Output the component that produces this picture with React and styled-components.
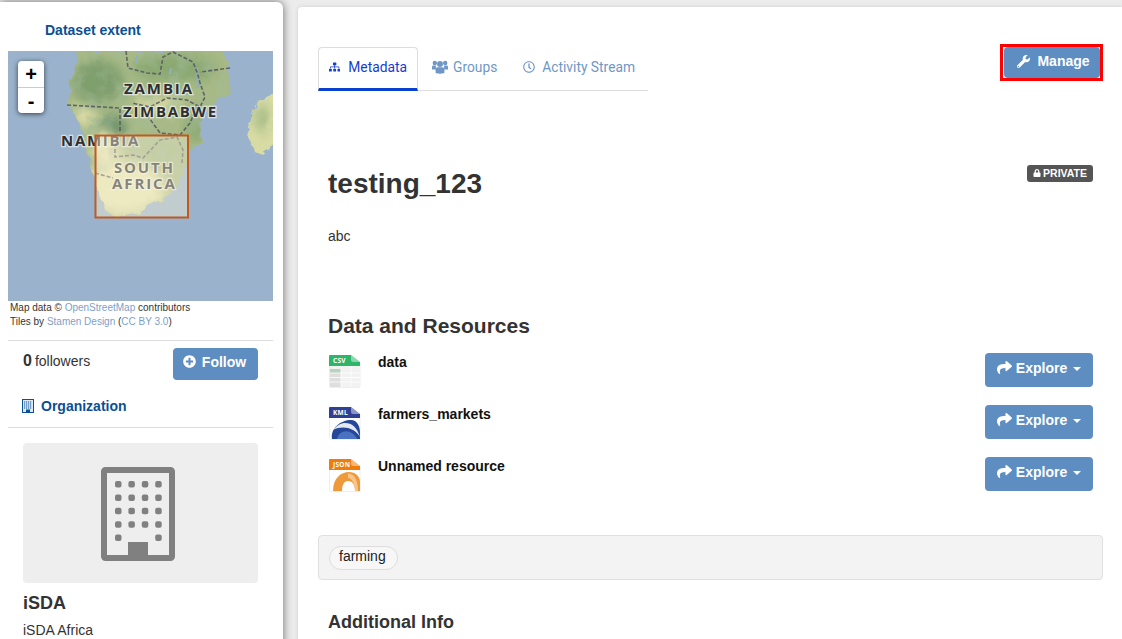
import React from 'react'
import styled, { createGlobalStyle } from 'styled-components'
import {
  FaSitemap,
  FaRegClock,
  FaWrench,
  FaLock,
  FaPlusCircle,
  FaShare,
} from 'react-icons/fa'

const GlobalStyle = createGlobalStyle`
  html, body {
    margin: 0;
    height: 639px;
    overflow: hidden;
    background: #ececec;
    font-family: "Liberation Sans", Arial, sans-serif;
    font-size: 14px;
    color: #333;
  }
`

const Page = styled.div`
  display: flex;
  gap: 15px;
  height: 639px;
  overflow: hidden;
  align-items: flex-start;
`

const Sidebar = styled.aside`
  width: 283px;
  height: 700px;
  flex: none;
  margin-top: 2px;
  padding: 0 10px 0 8px;
  box-sizing: border-box;
  background: #fff;
  border-radius: 0 6px 0 0;
  box-shadow: 0 0 10px rgba(0, 0, 0, 0.55);
`

const ExtentTitle = styled.h2`
  margin: 0;
  padding: 20px 0 0 37px;
  height: 49px;
  box-sizing: border-box;
  font-size: 14px;
  line-height: 16px;
  color: #0b4f94;
`

const MapBox = styled.div`
  position: relative;
  height: 250px;
  svg {
    display: block;
  }
`

const ZoomControl = styled.div`
  position: absolute;
  left: 10px;
  top: 10px;
  width: 26px;
  height: 52px;
  background: #fff;
  border-radius: 4px;
  box-shadow: 0 1px 5px rgba(0, 0, 0, 0.65);
  display: flex;
  flex-direction: column;
`

const ZoomButton = styled.span`
  height: 26px;
  line-height: 26px;
  text-align: center;
  font-size: 20px;
  font-weight: bold;
  color: #000;
  & + & {
    border-top: 1px solid #ccc;
  }
`

const Attribution = styled.p`
  margin: 0;
  padding: 0 0 11px 2px;
  font-size: 10px;
  line-height: 14px;
  border-bottom: 1px solid #ddd;
  a {
    color: #7d9fcb;
    text-decoration: none;
  }
`

const FollowRow = styled.div`
  display: flex;
  justify-content: space-between;
  align-items: flex-start;
  padding: 7px 15px 0;
  height: 49px;
`

const Followers = styled.span`
  line-height: 12px;
  height: 26px;
  display: flex;
  align-items: center;
  gap: 3px;
  b {
    font-size: 16px;
  }
`

const Button = styled.a`
  display: inline-flex;
  align-items: center;
  justify-content: center;
  box-sizing: border-box;
  padding-bottom: 3px;
  gap: 6px;
  background: #5e8dc1;
  color: #fff;
  font-weight: bold;
  font-size: 14px;
  border-radius: 4px;
`

const FollowButton = styled(Button)`
  width: 85px;
  height: 32px;
  padding: 0 2px 5px 0;
`

const OrgHeading = styled.h2`
  margin: 0;
  padding: 0 15px 12px 14px;
  font-size: 14px;
  line-height: 18px;
  color: #0b4f94;
  border-bottom: 1px solid #ddd;
  display: flex;
  align-items: center;
  gap: 7px;
`

const OrgCard = styled.div`
  padding: 15px 15px 0;
`

const OrgImage = styled.div`
  height: 140px;
  background: #eee;
  border-radius: 4px;
  display: flex;
  align-items: center;
  justify-content: center;
  padding: 2px 6px 0 0;
  box-sizing: border-box;
`

const OrgName = styled.h3`
  margin: 10px 0 0;
  font-size: 18px;
  line-height: 20px;
  color: #333;
`

const OrgDescription = styled.p`
  margin: 8px 0 0;
  line-height: 18px;
`

const Main = styled.main`
  flex: 1;
  height: 700px;
  margin-top: 7px;
  padding: 40px 19px 0 20px;
  background: #fff;
  border-radius: 4px 0 0 0;
  box-shadow: 0 0 4px rgba(0, 0, 0, 0.12);
`

const Header = styled.div`
  display: flex;
  justify-content: space-between;
  align-items: flex-start;
`

const Tabs = styled.nav`
  width: 330px;
  height: 44px;
  display: flex;
  border-bottom: 1px solid #ddd;
  box-sizing: border-box;
  font-family: Roboto, "Liberation Sans", sans-serif;
  font-size: 13.8px;
  white-space: nowrap;
`

const Tab = styled.a`
  display: flex;
  align-items: center;
  gap: ${p => p.$gap}px;
  height: 44px;
  box-sizing: border-box;
  padding: 0 12px 4px;
  color: #6f97c6;
  ${p =>
    p.$active &&
    `
    width: 100px;
    margin-right: 2px;
    padding: 0 10px 2px;
    color: #1440d0;
    border: 1px solid #ddd;
    border-bottom: 3px solid #0b3fd0;
    border-radius: 4px 4px 0 0;
  `}
  & + & + & {
    margin-left: 2px;
  }
`

const ManageFrame = styled.div`
  margin: -3px 0 0;
  border: 3px solid #f00;
  padding-left: 1px;
  display: flex;
`

const ManageButton = styled(Button)`
  width: 96px;
  height: 31px;
  padding-left: 3px;
  gap: 7px;
`

const TitleRow = styled.div`
  display: flex;
  justify-content: space-between;
  align-items: flex-start;
  padding: 75px 10px 0;
`

const Title = styled.h1`
  margin: 0;
  font-size: 28px;
  line-height: 36px;
  color: #333;
`

const PrivateBadge = styled.span`
  display: inline-flex;
  align-items: center;
  gap: 2px;
  height: 17px;
  margin-top: -1px;
  padding: 0 6px 2px;
  box-sizing: border-box;
  background: #555;
  color: #fff;
  border-radius: 3px;
  font-size: 10.5px;
  font-weight: bold;
`

const Notes = styled.p`
  margin: 0;
  padding: 25px 10px 0;
  line-height: 18px;
`

const SectionTitle = styled.h2`
  margin: 0;
  padding: ${p => p.$pad};
  font-size: ${p => p.$size}px;
  line-height: 24px;
  color: #333;
`

const ResourceList = styled.ul`
  list-style: none;
  margin: 0;
  padding: 15px 10px 0;
`

const ResourceRow = styled.li`
  display: flex;
  align-items: flex-start;
  height: 52px;
`

const ResourceIcon = styled.svg`
  width: 33px;
  height: 34px;
  flex: none;
  margin-top: 1px;
`

const ResourceName = styled.span`
  flex: 1;
  margin-left: 17px;
  line-height: 18px;
  font-weight: bold;
  color: #111;
`

const ExploreButton = styled(Button)`
  width: 108px;
  height: 34px;
  padding-bottom: 5px;
  gap: 4px;
  margin-left: auto;
`

const Caret = styled.span`
  width: 0;
  height: 0;
  margin: 2px 0 0 2px;
  border-left: 4px solid transparent;
  border-right: 4px solid transparent;
  border-top: 4px solid #fff;
`

const TagBox = styled.div`
  margin-top: 26px;
  height: 45px;
  box-sizing: border-box;
  padding: 10px;
  background: #f3f3f3;
  border: 1px solid #e0e0e0;
  border-radius: 4px;
`

const Tag = styled.span`
  display: inline-block;
  height: 24px;
  line-height: 19px;
  box-sizing: border-box;
  padding: 0 11px 0 9px;
  background: #f7f7f7;
  border: 1px solid #ddd;
  border-radius: 12px;
  color: #222;
`

// page coordinates, the map viewBox starts at 8,51
const MapDrawing = () => (
  <svg width="265" height="250" viewBox="8 51 265 250">
    <defs>
      <filter id="soft" x="-40%" y="-40%" width="180%" height="180%">
        <feGaussianBlur stdDeviation="6" />
      </filter>
      <filter id="rough" x="0" y="0" width="100%" height="100%">
        <feTurbulence type="fractalNoise" baseFrequency="0.09" numOctaves="3" seed="4" />
        <feDisplacementMap in="SourceGraphic" scale="9" />
      </filter>
      <filter id="mottle" x="0" y="0" width="100%" height="100%">
        <feTurbulence type="fractalNoise" baseFrequency="0.07" numOctaves="4" seed="9" />
        <feColorMatrix values="0 0 0 0 0.36  0 0 0 0 0.50  0 0 0 0 0.34  0 0 0 2.4 -1.0" />
      </filter>
      <clipPath id="land">
        <path d="M78 51 L72 72 L70 85 L68 105 L80 124 L88 157 L97 187 L105 210 L115 217 L140 212 L163 200 L180 180 L188 160 L190 150 L202 143 L200 123 L213 103 L232 87 L227 63 L223 51 Z" />
      </clipPath>
      <clipPath id="madagascar">
        <path d="M276 91 L257 100 L252 115 L248 133 L253 150 L263 155 L276 146 Z" />
      </clipPath>
    </defs>
    <rect x="8" y="51" width="265" height="250" fill="#9ab2cc" />
    <g filter="url(#rough)">
      <g clipPath="url(#land)">
        <rect x="60" y="51" width="180" height="170" fill="#a8ba86" />
        <ellipse cx="98" cy="82" rx="26" ry="22" fill="#7f9f6d" filter="url(#soft)" />
        <ellipse cx="112" cy="128" rx="13" ry="13" fill="#6a8f68" filter="url(#soft)" />
        <ellipse cx="175" cy="68" rx="42" ry="14" fill="#8aa871" filter="url(#soft)" />
        <ellipse cx="84" cy="116" rx="12" ry="9" fill="#e0dfa8" filter="url(#soft)" />
        <ellipse cx="160" cy="104" rx="24" ry="9" fill="#d5d8a2" filter="url(#soft)" />
        <ellipse cx="125" cy="188" rx="40" ry="28" fill="#ece7b2" filter="url(#soft)" />
        <ellipse cx="105" cy="152" rx="13" ry="22" fill="#ece7b2" filter="url(#soft)" />
        <ellipse cx="165" cy="152" rx="22" ry="14" fill="#a0b67f" filter="url(#soft)" />
        <ellipse cx="195" cy="125" rx="9" ry="18" fill="#8ca86f" filter="url(#soft)" />
        <rect x="60" y="51" width="180" height="120" filter="url(#mottle)" opacity="0.5" />
      </g>
      <g clipPath="url(#madagascar)">
        <rect x="245" y="90" width="32" height="70" fill="#d8dba4" />
        <ellipse cx="262" cy="118" rx="7" ry="14" fill="#a3b985" filter="url(#soft)" />
      </g>
    </g>
    <g fill="none" stroke="#8fb0c0" strokeWidth="2">
      <path d="M137 55 L136 64" />
      <path d="M171 68 L170 74" />
      <path d="M197 68 L198 88" />
    </g>
    <g fill="none" stroke="#55555f" strokeWidth="1.6" strokeDasharray="4 2" opacity="0.85">
      <path d="M67 105 L120 108 L120 133" />
      <path d="M126 51 L128 68 L147 73 L160 74 L163 57 L173 52 L193 62 L197 72 L200 83 L205 97 L200 107 L187 100 L167 98 L150 107 L132 103" />
      <path d="M230 68 L200 72" />
      <path d="M147 115 L160 133 L180 135 L190 123 L197 107" />
      <path d="M115 137 L115 157 L133 155 L143 158 L160 140 L177 137 L183 150 L182 163" />
      <path d="M95 173 L113 178" />
    </g>
    <g
      fontFamily="'Open Sans', Lato, sans-serif"
      fontWeight="700"
      fontSize="15"
      fill="#2f2f33"
      stroke="#fff"
      strokeOpacity="0.6"
      strokeWidth="2.5"
      paintOrder="stroke"
    >
      <text x="124" y="93.5" letterSpacing="1.9">ZAMBIA</text>
      <text x="123" y="117" letterSpacing="1.7">ZIMBABWE</text>
      <text x="61" y="146" letterSpacing="1.7">NAMIBIA</text>
      <text x="114" y="173" letterSpacing="1.8">SOUTH</text>
      <text x="112" y="189" letterSpacing="1.9">AFRICA</text>
    </g>
    <rect x="95.5" y="135.5" width="92.5" height="82" fill="#f0ebd0" fillOpacity="0.45" stroke="#bf5a20" strokeWidth="2" />
  </svg>
)

const BuildingDrawing = () => {
  const dots = []
  for (let row = 0; row < 5; row++) {
    for (let col = 0; col < 4; col++) {
      if (row === 4 && (col === 1 || col === 2)) continue
      dots.push(<rect key={`${row}-${col}`} x={14 + col * 13.4} y={14 + row * 13.4} width="6.5" height="6.5" rx="2" />)
    }
  }
  return (
    <svg width="74" height="94" viewBox="0 0 74 94">
      <rect x="3" y="3" width="68" height="88" rx="1.5" fill="none" stroke="#808080" strokeWidth="6" />
      <g fill="#808080">
        {dots}
        <rect x="27" y="75" width="20" height="17" />
      </g>
    </svg>
  )
}

// small building next to the Organization heading
const OrgIcon = () => (
  <svg width="12" height="14" viewBox="0 0 12 14">
    <rect x="0.5" y="0.5" width="11" height="13" fill="#dfe9f2" stroke="#0b4f94" />
    <path d="M2 3 H10 M2 5 H10 M2 7 H10 M2 9 H10" stroke="#0b4f94" strokeDasharray="1.2 0.8" />
    <rect x="4" y="10.5" width="4" height="3" fill="#0b4f94" />
  </svg>
)

const GroupsIcon = () => (
  <svg width="16" height="14" viewBox="0 0 16 14" fill="#6f97c6">
    <circle cx="2.8" cy="3" r="2.2" />
    <circle cx="13.2" cy="3" r="2.2" />
    <circle cx="8" cy="4" r="3" />
    <path d="M0 9.5 V7 Q0 5.6 1.5 5.6 H4 Q3.6 7.5 4 9.5 Z" />
    <path d="M16 9.5 V7 Q16 5.6 14.5 5.6 H12 Q12.4 7.5 12 9.5 Z" />
    <path d="M3.6 13 V9.5 Q3.6 7.2 5.6 7.2 H10.4 Q12.4 7.2 12.4 9.5 V13 Q8 14.6 3.6 13 Z" />
  </svg>
)

const FileIcon = ({ color, label, children }) => (
  <ResourceIcon viewBox="0 0 33 34">
    <rect x="1.5" y="8" width="30.5" height="25.5" rx="1" fill="#fff" stroke="#eee" />
    {children}
    <path d="M1 2 a1 1 0 0 1 1 -1 H23 L32 8 V12 H1 Z" fill={color} />
    <path d="M23 1 L32 8 H25 Q23 8 23 6 Z" fill="#fff" fillOpacity="0.45" />
    <text x="5" y="9" fontFamily="'Open Sans', sans-serif" fontWeight="700" fontSize="6.5" letterSpacing="0.3" fill="#fff">
      {label}
    </text>
  </ResourceIcon>
)

const resources = [
  {
    name: 'data',
    color: '#2fb56a',
    label: 'CSV',
    art: (
      <g>
        <rect x="2" y="12" width="30" height="21" fill="#f2f2f2" />
        <rect x="2" y="15" width="11" height="4" fill="#b9d3c2" />
        <rect x="2" y="19" width="11" height="14" fill="#dedede" />
        <path d="M13 12 V33 M23 12 V33 M2 19 H32 M2 23.5 H32 M2 28 H32" stroke="#fff" strokeWidth="0.8" />
      </g>
    ),
  },
  {
    name: 'farmers_markets',
    color: '#2f3f94',
    label: 'KML',
    art: (
      <g>
        <path d="M4 33 C2 22 13 14 23 14 C29 14 32 20 32 27 V33 Z" fill="#24479a" />
        <path d="M5 24 C12 14 27 13 32 31 C27 22 15 19 5 24 Z" fill="#e4e8ef" />
        <path d="M9 33 C10 27 16 23.5 22 26 C26 28 28 30 29 33 Z" fill="#4a72c0" />
      </g>
    ),
  },
  {
    name: 'Unnamed resource',
    color: '#ef7d0c',
    label: 'JSON',
    art: (
      <g>
        <path d="M5 33 C5 20 13 14 21 14 C27 14 32 18 32 24 V33 Z" fill="#ef9a3a" />
        <path d="M14 33 C14 27 16 23 20 23 C24 23 27 26 27 33 Z" fill="#fff" />
        <path d="M20 15.5 C25 15.5 30 20 30 33 H27 C27 26 24 20 20 20 Z" fill="#f6c58c" />
      </g>
    ),
  },
]

const App = () => (
  <Page>
    <GlobalStyle />
    <Sidebar>
      <ExtentTitle>Dataset extent</ExtentTitle>
      <MapBox>
        <MapDrawing />
        <ZoomControl>
          <ZoomButton>+</ZoomButton>
          <ZoomButton>-</ZoomButton>
        </ZoomControl>
      </MapBox>
      <Attribution>
        Map data © <a href="#osm">OpenStreetMap</a> contributors
        <br />
        Tiles by <a href="#stamen">Stamen Design</a> (<a href="#cc">CC BY 3.0</a>)
      </Attribution>
      <FollowRow>
        <Followers>
          <b>0</b> followers
        </Followers>
        <FollowButton>
          <FaPlusCircle size={13} /> Follow
        </FollowButton>
      </FollowRow>
      <OrgHeading>
        <OrgIcon /> Organization
      </OrgHeading>
      <OrgCard>
        <OrgImage>
          <BuildingDrawing />
        </OrgImage>
        <OrgName>iSDA</OrgName>
        <OrgDescription>iSDA Africa</OrgDescription>
      </OrgCard>
    </Sidebar>
    <Main>
      <Header>
        <Tabs>
          <Tab $active $gap={8}>
            <FaSitemap size={14} /> Metadata
          </Tab>
          <Tab $gap={5}>
            <GroupsIcon /> Groups
          </Tab>
          <Tab $gap={7}>
            <FaRegClock size={12} /> Activity Stream
          </Tab>
        </Tabs>
        <ManageFrame>
          <ManageButton>
            <FaWrench size={13} /> Manage
          </ManageButton>
        </ManageFrame>
      </Header>
      <TitleRow>
        <Title>testing_123</Title>
        <PrivateBadge>
          <FaLock size={8} /> PRIVATE
        </PrivateBadge>
      </TitleRow>
      <Notes>abc</Notes>
      <SectionTitle $size={21} $pad="69px 10px 0">
        Data and Resources
      </SectionTitle>
      <ResourceList>
        {resources.map(resource => (
          <ResourceRow key={resource.name}>
            <FileIcon color={resource.color} label={resource.label}>
              {resource.art}
            </FileIcon>
            <ResourceName>{resource.name}</ResourceName>
            <ExploreButton>
              <FaShare size={15} /> Explore <Caret />
            </ExploreButton>
          </ResourceRow>
        ))}
      </ResourceList>
      <TagBox>
        <Tag>farming</Tag>
      </TagBox>
      <SectionTitle $size={18} $pad="30px 10px 0">
        Additional Info
      </SectionTitle>
    </Main>
  </Page>
)

export default App
